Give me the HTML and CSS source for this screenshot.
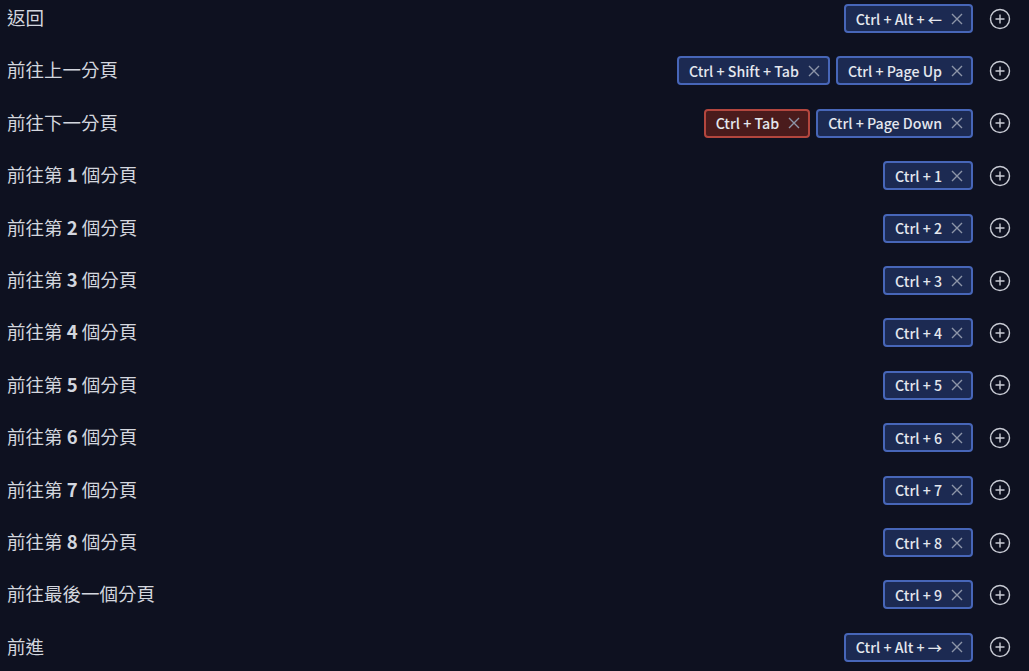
FILE: index.html
```html
<!DOCTYPE html>
<html lang="zh-Hant">
<head>
<meta charset="utf-8">
<link rel="stylesheet" href="styles.css">
</head>
<body>
<div class="list">
  <div class="row"><div class="label">返回</div><div class="keys"><span class="chip">Ctrl + Alt + ←<svg class="x" viewBox="0 0 12 12"><path d="M1 1L11 11M11 1L1 11"/></svg></span><svg class="plus" viewBox="0 0 22 22"><circle cx="11" cy="11" r="9.5"/><path d="M11 6.5V15.5M6.5 11H15.5"/></svg></div></div>
  <div class="row"><div class="label">前往上一分頁</div><div class="keys"><span class="chip">Ctrl + Shift + Tab<svg class="x" viewBox="0 0 12 12"><path d="M1 1L11 11M11 1L1 11"/></svg></span><span class="chip">Ctrl + Page Up<svg class="x" viewBox="0 0 12 12"><path d="M1 1L11 11M11 1L1 11"/></svg></span><svg class="plus" viewBox="0 0 22 22"><circle cx="11" cy="11" r="9.5"/><path d="M11 6.5V15.5M6.5 11H15.5"/></svg></div></div>
  <div class="row"><div class="label">前往下一分頁</div><div class="keys"><span class="chip conflict">Ctrl + Tab<svg class="x" viewBox="0 0 12 12"><path d="M1 1L11 11M11 1L1 11"/></svg></span><span class="chip">Ctrl + Page Down<svg class="x" viewBox="0 0 12 12"><path d="M1 1L11 11M11 1L1 11"/></svg></span><svg class="plus" viewBox="0 0 22 22"><circle cx="11" cy="11" r="9.5"/><path d="M11 6.5V15.5M6.5 11H15.5"/></svg></div></div>
  <div class="row"><div class="label">前往第 <b>1</b> 個分頁</div><div class="keys"><span class="chip">Ctrl + 1<svg class="x" viewBox="0 0 12 12"><path d="M1 1L11 11M11 1L1 11"/></svg></span><svg class="plus" viewBox="0 0 22 22"><circle cx="11" cy="11" r="9.5"/><path d="M11 6.5V15.5M6.5 11H15.5"/></svg></div></div>
  <div class="row"><div class="label">前往第 <b>2</b> 個分頁</div><div class="keys"><span class="chip">Ctrl + 2<svg class="x" viewBox="0 0 12 12"><path d="M1 1L11 11M11 1L1 11"/></svg></span><svg class="plus" viewBox="0 0 22 22"><circle cx="11" cy="11" r="9.5"/><path d="M11 6.5V15.5M6.5 11H15.5"/></svg></div></div>
  <div class="row"><div class="label">前往第 <b>3</b> 個分頁</div><div class="keys"><span class="chip">Ctrl + 3<svg class="x" viewBox="0 0 12 12"><path d="M1 1L11 11M11 1L1 11"/></svg></span><svg class="plus" viewBox="0 0 22 22"><circle cx="11" cy="11" r="9.5"/><path d="M11 6.5V15.5M6.5 11H15.5"/></svg></div></div>
  <div class="row"><div class="label">前往第 <b>4</b> 個分頁</div><div class="keys"><span class="chip">Ctrl + 4<svg class="x" viewBox="0 0 12 12"><path d="M1 1L11 11M11 1L1 11"/></svg></span><svg class="plus" viewBox="0 0 22 22"><circle cx="11" cy="11" r="9.5"/><path d="M11 6.5V15.5M6.5 11H15.5"/></svg></div></div>
  <div class="row"><div class="label">前往第 <b>5</b> 個分頁</div><div class="keys"><span class="chip">Ctrl + 5<svg class="x" viewBox="0 0 12 12"><path d="M1 1L11 11M11 1L1 11"/></svg></span><svg class="plus" viewBox="0 0 22 22"><circle cx="11" cy="11" r="9.5"/><path d="M11 6.5V15.5M6.5 11H15.5"/></svg></div></div>
  <div class="row"><div class="label">前往第 <b>6</b> 個分頁</div><div class="keys"><span class="chip">Ctrl + 6<svg class="x" viewBox="0 0 12 12"><path d="M1 1L11 11M11 1L1 11"/></svg></span><svg class="plus" viewBox="0 0 22 22"><circle cx="11" cy="11" r="9.5"/><path d="M11 6.5V15.5M6.5 11H15.5"/></svg></div></div>
  <div class="row"><div class="label">前往第 <b>7</b> 個分頁</div><div class="keys"><span class="chip">Ctrl + 7<svg class="x" viewBox="0 0 12 12"><path d="M1 1L11 11M11 1L1 11"/></svg></span><svg class="plus" viewBox="0 0 22 22"><circle cx="11" cy="11" r="9.5"/><path d="M11 6.5V15.5M6.5 11H15.5"/></svg></div></div>
  <div class="row"><div class="label">前往第 <b>8</b> 個分頁</div><div class="keys"><span class="chip">Ctrl + 8<svg class="x" viewBox="0 0 12 12"><path d="M1 1L11 11M11 1L1 11"/></svg></span><svg class="plus" viewBox="0 0 22 22"><circle cx="11" cy="11" r="9.5"/><path d="M11 6.5V15.5M6.5 11H15.5"/></svg></div></div>
  <div class="row"><div class="label">前往最後一個分頁</div><div class="keys"><span class="chip">Ctrl + 9<svg class="x" viewBox="0 0 12 12"><path d="M1 1L11 11M11 1L1 11"/></svg></span><svg class="plus" viewBox="0 0 22 22"><circle cx="11" cy="11" r="9.5"/><path d="M11 6.5V15.5M6.5 11H15.5"/></svg></div></div>
  <div class="row"><div class="label">前進</div><div class="keys"><span class="chip">Ctrl + Alt + →<svg class="x" viewBox="0 0 12 12"><path d="M1 1L11 11M11 1L1 11"/></svg></span><svg class="plus" viewBox="0 0 22 22"><circle cx="11" cy="11" r="9.5"/><path d="M11 6.5V15.5M6.5 11H15.5"/></svg></div></div>
</div>
</body>
</html>
```

FILE: styles.css
```css
html, body {
  margin: 0;
  padding: 0;
  background: #0e1120;
}
body {
  font-family: "Noto Sans CJK TC", "Noto Sans", sans-serif;
  color: #d3d6de;
}
.list {
  display: flex;
  flex-direction: column;
  padding: 4px 18px 0 7px;
}
.row {
  display: flex;
  justify-content: space-between;
  align-items: flex-start;
  height: 52.42px;
}
.label {
  font-size: 18.5px;
  line-height: 26px;
}
.label b {
  font-weight: 700;
}
.keys {
  display: flex;
  align-items: center;
  gap: 6px;
  height: 29px;
}
.chip {
  display: inline-flex;
  align-items: center;
  box-sizing: border-box;
  height: 29px;
  padding: 0 8px 0 10px;
  border: 2px solid #4766b8;
  border-radius: 4px;
  background: #1c2a52;
  color: #e4e7ee;
  font-size: 14.2px;
  font-weight: 500;
  white-space: nowrap;
}
.chip.conflict {
  background: #4a1b1c;
  border-color: #b3463e;
}
.x {
  width: 12px;
  height: 12px;
  margin-left: 9px;
  fill: none;
  stroke: #8d95a8;
  stroke-width: 1.4;
}
.plus {
  width: 22px;
  height: 22px;
  margin-left: 10px;
  fill: none;
  stroke: #c9ccd5;
  stroke-width: 1.4;
}
```
